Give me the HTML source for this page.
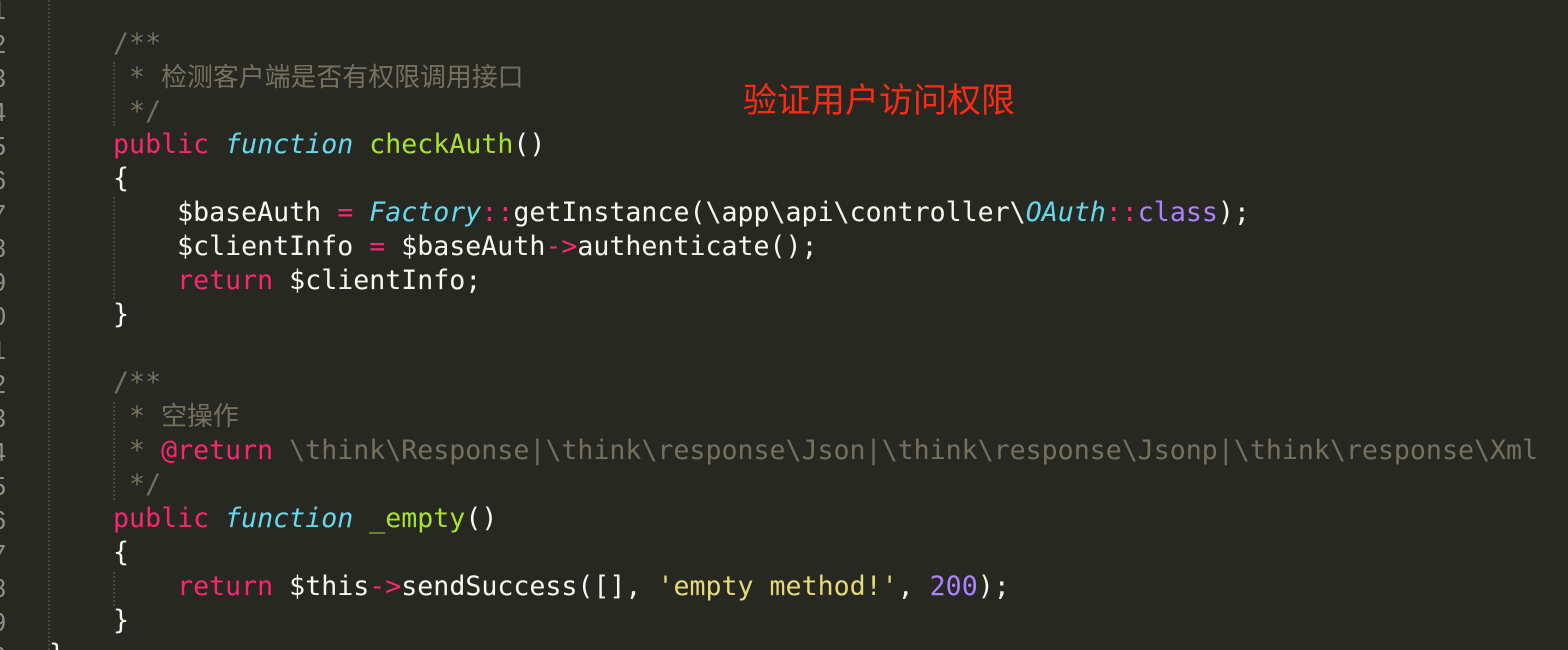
<!DOCTYPE html>
<html><head><meta charset="utf-8"><style>
html,body{margin:0;padding:0;background:#272822;width:1568px;height:650px;overflow:hidden;position:relative}
.l{position:absolute;left:49px;height:34px;line-height:34px;white-space:pre;font-family:"DejaVu Sans Mono","Noto Sans CJK SC",monospace;font-size:26.6px;color:#F8F8F2}
.n{position:absolute;right:1562px;height:34px;line-height:34px;font-family:"Liberation Sans",sans-serif;font-size:26px;color:#8F908A}
.c{color:#75715E}.p{color:#F92672}.f{color:#66D9EF;font-style:italic}.g{color:#A6E22E}.v{color:#AE81FF}.y{color:#E6DB74}
.k{font-size:25.9px}
.gd{position:absolute;width:0;border-left:2px dotted #46473f}
.ann{position:absolute;left:743px;top:77px;font-family:"Noto Sans CJK SC",sans-serif;font-size:34px;color:#FF2A12;line-height:42px}
</style></head><body>
<div class="gd" style="left:48px;top:0;height:650px"></div>
<div class="gd" style="left:113px;top:62px;height:64px"></div>
<div class="gd" style="left:113px;top:197px;height:102px"></div>
<div class="gd" style="left:113px;top:402px;height:98px"></div>
<div class="gd" style="left:113px;top:572px;height:34px"></div>

<div class="n" style="top:-7px">1</div>
<div class="n" style="top:27px">2</div>
<div class="n" style="top:61px">3</div>
<div class="n" style="top:95px">4</div>
<div class="n" style="top:129px">5</div>
<div class="n" style="top:163px">6</div>
<div class="n" style="top:197px">7</div>
<div class="n" style="top:231px">8</div>
<div class="n" style="top:265px">9</div>
<div class="n" style="top:299px">0</div>
<div class="n" style="top:333px">1</div>
<div class="n" style="top:367px">2</div>
<div class="n" style="top:401px">3</div>
<div class="n" style="top:435px">4</div>
<div class="n" style="top:469px">5</div>
<div class="n" style="top:503px">6</div>
<div class="n" style="top:537px">7</div>
<div class="n" style="top:571px">8</div>
<div class="n" style="top:605px">9</div>
<div class="n" style="top:639px">0</div>

<div class="l c" style="top:27px">    /**</div>
<div class="l c" style="top:61px">     * <span class="k">检测客户端是否有权限调用接口</span></div>
<div class="l c" style="top:95px">     */</div>
<div class="l" style="top:128px">    <span class="p">public</span> <span class="f">function</span> <span class="g">checkAuth</span>()</div>
<div class="l" style="top:162px">    {</div>
<div class="l" style="top:196px">        $baseAuth <span class="p">=</span> <span class="f">Factory</span><span class="p">::</span>getInstance(\app\api\controller\<span class="f">OAuth</span><span class="p">::</span><span class="v">class</span>);</div>
<div class="l" style="top:230px">        $clientInfo <span class="p">=</span> $baseAuth<span class="p">-&gt;</span>authenticate();</div>
<div class="l" style="top:264px">        <span class="p">return</span> $clientInfo;</div>
<div class="l" style="top:298px">    }</div>
<div class="l c" style="top:366px">    /**</div>
<div class="l c" style="top:400px">     * <span class="k">空操作</span></div>
<div class="l c" style="top:434px">     * <span class="p">@return</span> \think\Response|\think\response\Json|\think\response\Jsonp|\think\response\Xml</div>
<div class="l c" style="top:468px">     */</div>
<div class="l" style="top:502px">    <span class="p">public</span> <span class="f">function</span> <span class="g">_empty</span>()</div>
<div class="l" style="top:536px">    {</div>
<div class="l" style="top:570px">        <span class="p">return</span> $this<span class="p">-&gt;</span>sendSuccess([], <span class="y">'empty method!'</span>, <span class="v">200</span>);</div>
<div class="l" style="top:604px">    }</div>
<div class="l" style="top:638px">}</div>

<div class="ann">验证用户访问权限</div>
</body></html>
